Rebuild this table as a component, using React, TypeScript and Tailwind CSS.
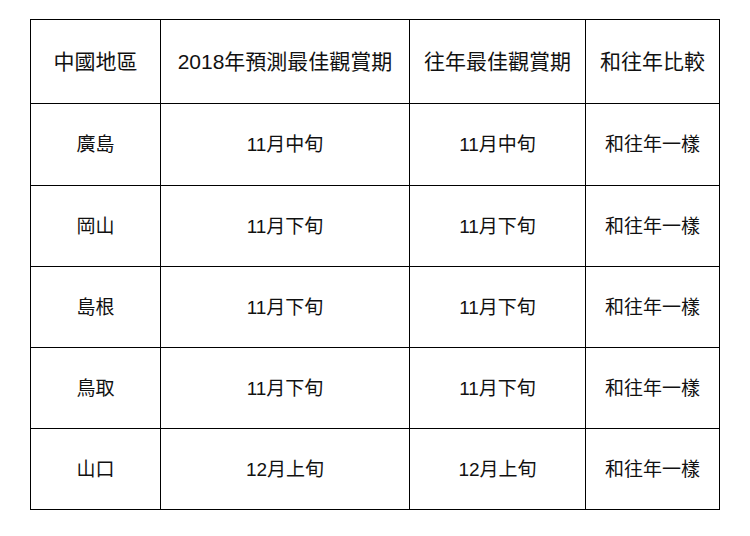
import React from "react";

const header = ["中國地區", "2018年預測最佳觀賞期", "往年最佳觀賞期", "和往年比較"];
const rows = [
  ["廣島", "11月中旬", "11月中旬", "和往年一樣"],
  ["岡山", "11月下旬", "11月下旬", "和往年一樣"],
  ["島根", "11月下旬", "11月下旬", "和往年一樣"],
  ["鳥取", "11月下旬", "11月下旬", "和往年一樣"],
  ["山口", "12月上旬", "12月上旬", "和往年一樣"],
];

export default function App() {
  return (
    <div
      className="w-[750px] h-[536px] bg-white pt-[19px] pl-[30px]"
      style={{ fontFamily: '"Liberation Sans", "Noto Sans CJK TC", sans-serif' }}
    >
      <div className="grid w-[690px] grid-cols-[130px_249px_176px_134px] grid-rows-[84px_82px_81px_81px_81px_81px] border-t border-l border-black text-[#111]">
        {header.map((h, i) => (
          <div
            key={"h" + i}
            className="flex items-center justify-center border-r border-b border-black text-[21px] leading-none"
          >
            {h}
          </div>
        ))}
        {rows.map((r, ri) =>
          r.map((c, ci) => (
            <div
              key={ri + "-" + ci}
              className="flex items-center justify-center border-r border-b border-black text-[19px] leading-none"
            >
              {c}
            </div>
          ))
        )}
      </div>
    </div>
  );
}
